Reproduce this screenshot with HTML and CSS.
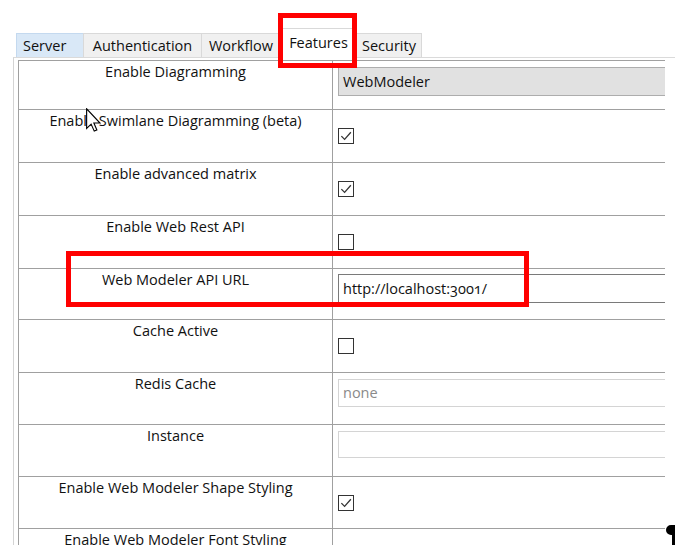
FILE: index.html
```html
<!DOCTYPE html>
<html>
<head>
<meta charset="utf-8">
<link rel="stylesheet" href="styles.css">
</head>
<body>
<div class="app">
  <div class="tabs">
    <div class="tab tab-server hover">Server</div>
    <div class="tab tab-auth">Authentication</div>
    <div class="tab tab-workflow">Workflow</div>
    <div class="tab tab-features active">Features</div>
    <div class="tab tab-security">Security</div>
  </div>
  <div class="panel">
    <div class="grid">
      <div class="row row-combo">
        <div class="label">Enable Diagramming</div>
        <div class="value field-cell"><div class="field combo">WebModeler</div></div>
      </div>
      <div class="row">
        <div class="label">Enable Swimlane Diagramming (beta)</div>
        <div class="value check-cell"><span class="check"><svg viewBox="0 0 13 13"><polyline points="2.2,6.6 5.2,9.6 11,3"/></svg></span></div>
      </div>
      <div class="row">
        <div class="label">Enable advanced matrix</div>
        <div class="value check-cell"><span class="check"><svg viewBox="0 0 13 13"><polyline points="2.2,6.6 5.2,9.6 11,3"/></svg></span></div>
      </div>
      <div class="row">
        <div class="label">Enable Web Rest API</div>
        <div class="value check-cell"><span class="check"></span></div>
      </div>
      <div class="row row-url">
        <div class="label">Web Modeler API URL</div>
        <div class="value field-cell"><div class="field url">http://localhost:3001/</div></div>
      </div>
      <div class="row">
        <div class="label">Cache Active</div>
        <div class="value check-cell"><span class="check"></span></div>
      </div>
      <div class="row compact">
        <div class="label">Redis Cache</div>
        <div class="value field-cell"><div class="field disabled">none</div></div>
      </div>
      <div class="row compact">
        <div class="label">Instance</div>
        <div class="value field-cell"><div class="field disabled short"></div></div>
      </div>
      <div class="row compact">
        <div class="label">Enable Web Modeler Shape Styling</div>
        <div class="value check-cell"><span class="check"><svg viewBox="0 0 13 13"><polyline points="2.2,6.6 5.2,9.6 11,3"/></svg></span></div>
      </div>
      <div class="row">
        <div class="label">Enable Web Modeler Font Styling</div>
        <div class="value check-cell"></div>
      </div>
    </div>
  </div>

  <div class="highlight hl-tab"></div>
  <div class="highlight hl-url"></div>

  <svg class="cursor" viewBox="0 0 12 19">
    <path d="M0.5,0.5 L0.5,16.2 L4.1,12.8 L6.6,18.4 L8.7,17.5 L6.3,11.9 L11.2,11.9 Z"/>
  </svg>
  <svg class="pin" viewBox="0 0 12 21">
    <path d="M12,0 H7 A5,5 0 0 0 7,10 H8 V21 H12 Z"/>
  </svg>
</div>
</body>
</html>
```

FILE: styles.css
```css
html, body {
  margin: 0;
  padding: 0;
  background: #ffffff;
}

.app {
  position: relative;
  width: 675px;
  height: 545px;
  overflow: hidden;
  font-family: "Open Sans", "Noto Sans", sans-serif;
  color: #111111;
}

/* ---------- tabs ---------- */
.tabs {
  display: flex;
  align-items: flex-end;
  height: 57px;
  padding-left: 16px;
  box-sizing: border-box;
  position: relative;
  z-index: 2;
}

.tab {
  box-sizing: border-box;
  height: 24px;
  margin-right: -1px;
  border: 1px solid #d9d9d9;
  border-bottom: none;
  background: #f0f0f0;
  font-size: 14.5px;
  line-height: 24px;
  text-align: center;
  color: #111111;
  white-space: nowrap;
}

.tab.hover {
  background: #d9e8f7;
  border-color: #c4d9ef;
}

.tab-server { width: 68px; text-align: left; padding-left: 6px; }
.tab-auth { width: 119px; }
.tab-workflow { width: 80px; }
.tab-features { width: 77px; }
.tab-security { width: 66px; }

.tab.active {
  height: 30px;
  margin-bottom: -1px;
  background: #ffffff;
  line-height: 28px;
  position: relative;
  z-index: 3;
}

/* ---------- panel / grid ---------- */
.panel {
  margin-left: 13px;
  border-left: 1px solid #d4d4d4;
  border-top: 1px solid #dadada;
  padding: 2px 0 0 4px;
  height: 600px;
}

.grid {
  width: 646px;
  border-left: 1px solid #a0a0a0;
  border-top: 1px solid #a0a0a0;
  overflow: hidden;
}

.row {
  display: grid;
  grid-template-columns: 313px 1fr;
  height: 53px;
  box-sizing: border-box;
  border-bottom: 1px solid #a0a0a0;
}

.row.row-combo { height: 49px; }
.row.row-url { height: 51px; }
.row.compact { height: 52px; }

.label {
  text-align: center;
  font-size: 14.5px;
  line-height: 20px;
  padding-top: 1px;
  white-space: nowrap;
}

.value {
  border-left: 1px solid #a0a0a0;
  overflow: hidden;
  padding-left: 5px;
}

.check-cell {
  padding-top: 18px;
}

.check {
  display: block;
  box-sizing: border-box;
  width: 16px;
  height: 16px;
  border: 1px solid #333333;
  background: #ffffff;
}

.check svg {
  display: block;
  width: 14px;
  height: 14px;
}

.check polyline {
  fill: none;
  stroke: #333333;
  stroke-width: 1.2;
}

.field-cell {
  padding-top: 6px;
}

.field {
  box-sizing: border-box;
  width: calc(100% + 10px);
  height: 29px;
  border: 1px solid #adadad;
  padding-left: 4px;
  font-size: 14.5px;
  line-height: 27px;
  white-space: nowrap;
}

.combo {
  background: #e1e1e1;
  border-color: #adadad;
}

.row-url .field-cell { padding-top: 5px; }

.url {
  border-color: #7a7a7a;
  background: #ffffff;
  font-variant-numeric: oldstyle-nums;
}

.disabled {
  border-color: #d4d4d4;
  color: #8a8a8a;
  height: 28px;
  line-height: 26px;
}

.disabled.short { height: 27px; }

/* ---------- overlays ---------- */
.highlight {
  position: absolute;
  box-sizing: border-box;
  border: 5px solid #ff0000;
  z-index: 5;
}

.hl-tab {
  left: 278px;
  top: 13px;
  width: 79px;
  height: 55px;
}

.hl-url {
  left: 66px;
  top: 251px;
  width: 463px;
  height: 56px;
}

.cursor {
  position: absolute;
  left: 86px;
  top: 108px;
  width: 15px;
  height: 24px;
  z-index: 6;
}

.cursor path {
  fill: #ffffff;
  stroke: #000000;
  stroke-width: 0.9;
  stroke-linejoin: miter;
}

.pin {
  position: absolute;
  left: 664px;
  top: 525px;
  width: 12px;
  height: 21px;
  z-index: 6;
}

.pin path {
  fill: #000000;
}
```
